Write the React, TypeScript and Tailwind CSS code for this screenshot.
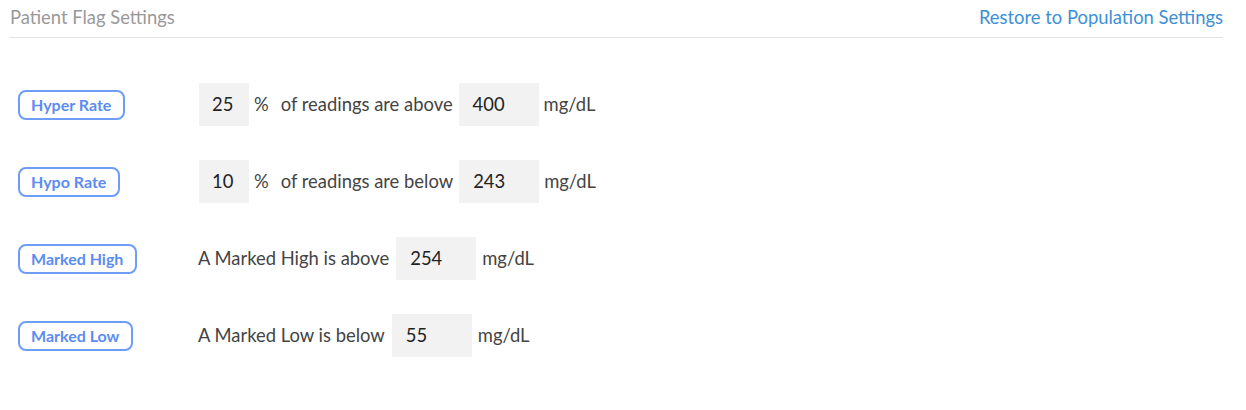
const rows = [
  { label: 'Hyper Rate', kind: 'rate', pct: '25', dir: 'above', value: '400' },
  { label: 'Hypo Rate', kind: 'rate', pct: '10', dir: 'below', value: '243' },
  { label: 'Marked High', kind: 'mark', dir: 'above', value: '254' },
  { label: 'Marked Low', kind: 'mark', dir: 'below', value: '55' },
];

function Box({ value, wide }: { value: string; wide?: boolean }) {
  return (
    <div className={`h-[43px] ${wide ? 'w-[80px] pl-[14px]' : 'w-[50px] pl-[13px]'} bg-[#f2f2f2] flex items-center text-[#222] text-[18.4px]`}>
      {value}
    </div>
  );
}

export default function App() {
  return (
    <div className="w-[1246px] h-[410px] bg-white px-[10px] text-[#444]" style={{ fontFamily: 'Lato, "Open Sans", sans-serif' }}>
      {/* Header */}
      <div className="flex items-center justify-between pt-[6px] pb-[9px] border-b border-[#e4e4e4] mr-[13px] leading-[22px]">
        <span className="text-[18.4px] text-[#999]">Patient Flag Settings</span>
        <span className="text-[18.4px] text-[#3d8fd6]">Restore to Population Settings</span>
      </div>

      <div className="mt-[28px] pl-[8px]">
        {rows.map(r => (
          <div key={r.label} className="flex items-center h-[77px]">
            <div className="w-[180px] shrink-0">
              <span className="inline-block h-[30px] leading-[26px] pl-[11px] pr-[12px] border-2 border-[#6e9cf7] rounded-[8px] text-[16px] font-bold text-[#5b8df0]">
                {r.label}
              </span>
            </div>
            {r.kind === 'rate' ? (
              <div className="flex items-center text-[18.4px] text-[#444]">
                <div className="ml-[1px]"><Box value={r.pct!} /></div>
                <span className="ml-[5px]">%</span>
                <span className="ml-[12px] mr-[6px]">of readings are {r.dir}</span>
                <Box value={r.value} wide />
                <span className="ml-[5px]">mg/dL</span>
              </div>
            ) : (
              <div className="flex items-center text-[18.4px] text-[#444]">
                <span className="mr-[7px]">A Marked {r.label === 'Marked High' ? 'High' : 'Low'} is {r.dir}</span>
                <Box value={r.value} wide />
                <span className="ml-[6px]">mg/dL</span>
              </div>
            )}
          </div>
        ))}
      </div>
    </div>
  );
}
